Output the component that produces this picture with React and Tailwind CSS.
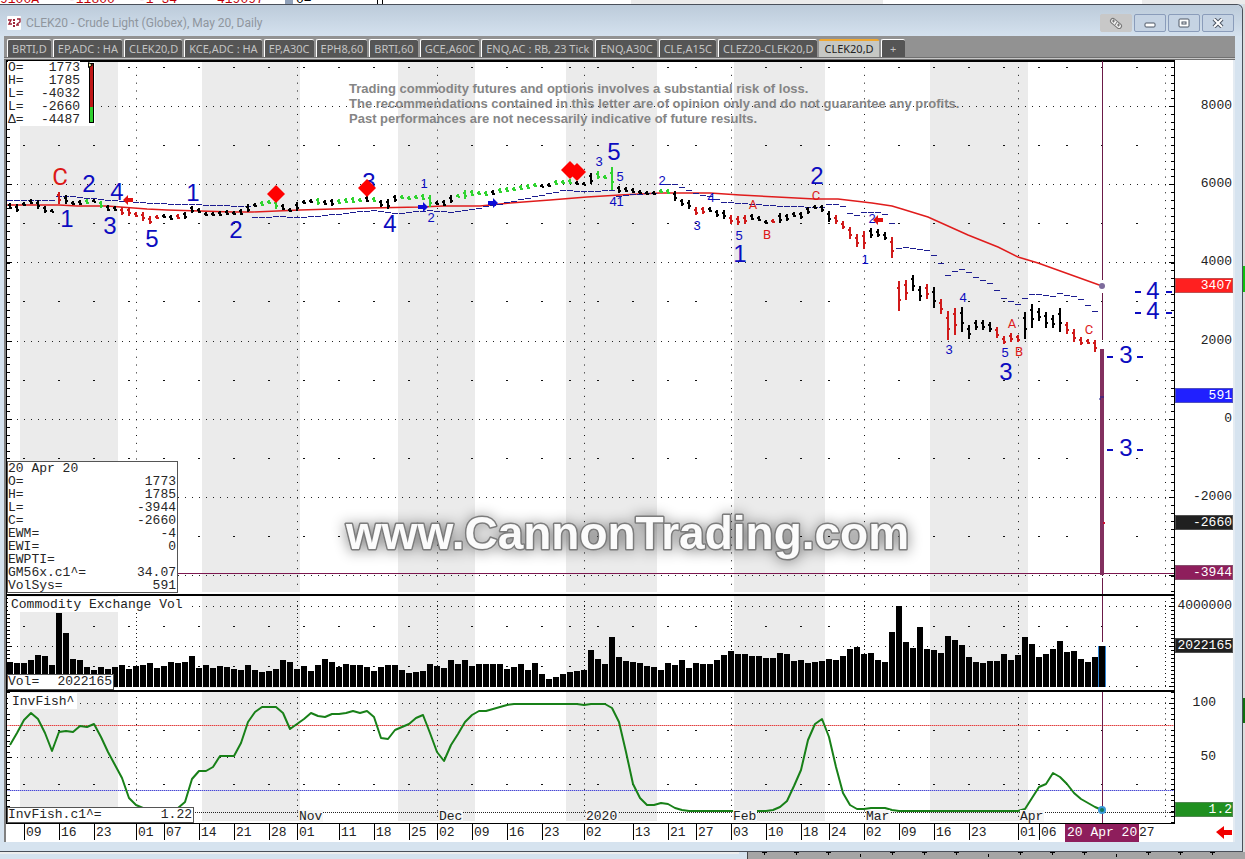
const MONO = "font-['Liberation_Mono',monospace]";

const TABS = [
  "BRTI,D",
  "EP,ADC : HA",
  "CLEK20,D",
  "KCE,ADC : HA",
  "EP,A30C",
  "EPH8,60",
  "BRTI,60",
  "GCE,A60C",
  "ENQ,AC : RB, 23 Tick",
  "ENQ,A30C",
  "CLE,A15C",
  "CLEZ20-CLEK20,D",
];

// one bar every 7 units, first one at x = 10
const barX = (i) => 10 + i * 7;

// ── Price bars: [high, low] in plot units, K black / R red / G green ──
const PRICE = `203 209 K,204 212 K,202 206 K,199 204 K,200 209 K,206 213 K,209 212 K,192 204 R,195 204 K,201 205 K,
200 205 K,199 204 G,199 202 K,201 208 G,205 211 K,206 211 K,207 215 R,207 216 R,212 217 R,212 221 R,
216 224 R,215 219 R,214 218 K,215 220 K,214 219 R,212 219 K,206 213 K,208 213 K,212 216 K,212 216 K,
211 216 K,210 215 K,211 215 K,209 215 K,204 212 K,203 207 K,201 206 G,200 204 G,200 209 G,204 210 K,
208 212 K,202 211 K,200 204 K,199 203 K,198 205 G,200 205 K,199 206 K,199 204 G,198 203 G,197 203 G,
198 202 G,196 202 K,197 202 G,200 207 K,199 209 K,195 202 K,195 199 G,196 200 G,195 199 G,194 200 G,
195 207 G,201 205 K,200 206 K,195 203 K,194 197 G,190 199 G,190 196 G,191 195 G,191 196 G,190 195 K,
188 193 G,187 192 G,187 191 G,185 190 G,184 189 G,183 187 G,184 187 K,183 187 K,180 185 G,180 184 G,
179 184 G,181 185 K,182 185 K,173 184 K,171 179 G,175 179 G,167 190 G,186 193 K,187 192 K,188 193 K,
190 194 K,191 195 K,191 195 K,189 193 G,189 194 G,191 201 K,199 206 K,200 209 K,207 215 R,207 214 R,
207 212 K,210 217 K,210 219 K,215 224 R,216 225 R,215 224 R,214 220 K,216 221 K,220 224 K,219 223 R,
213 223 K,214 221 K,212 217 K,212 219 K,207 214 K,205 209 K,205 212 K,211 222 K,215 224 R,221 229 R,
227 239 R,234 247 R,231 249 R,228 238 K,229 237 K,232 240 K,237 258 R,281 311 R,280 300 R,275 291 K,
286 301 K,284 299 R,287 308 K,299 314 R,311 340 R,308 335 R,307 332 K,325 339 K,320 330 K,320 330 K,
322 332 K,327 338 R,336 344 R,333 342 R,335 342 R,312 339 K,304 328 K,308 321 K,312 328 K,315 328 K,
308 332 K,322 334 R,329 342 R,337 345 R,339 344 R,340 352 R`
  .split(",")
  .map((row) => {
    const [hi, lo, tone] = row.trim().split(" ");
    return { hi: +hi, lo: +lo, tone };
  });

const TONES = { K: "#000000", R: "#d01a1a", G: "#2fd32f" };

const VOLUME = [
  662, 663, 663, 660, 655, 656, 665, 613, 633, 659, 660, 667, 670, 667, 669, 667, 665, 669, 666, 665,
  663, 668, 666, 662, 663, 662, 656, 668, 665, 668, 666, 667, 669, 670, 665, 670, 672, 671, 669, 660,
  662, 669, 666, 671, 665, 659, 662, 667, 664, 665, 665, 667, 671, 667, 665, 665, 670, 673, 672, 671,
  664, 666, 668, 660, 664, 660, 666, 664, 664, 664, 664, 669, 667, 664, 670, 663, 674, 679, 677, 674,
  672, 671, 670, 650, 659, 664, 637, 657, 661, 662, 663, 666, 667, 670, 663, 665, 660, 668, 663, 664,
  664, 660, 655, 651, 654, 654, 656, 656, 658, 658, 653, 654, 661, 660, 663, 662, 661, 659, 660, 656,
  649, 647, 654, 653, 660, 662, 632, 606, 642, 648, 627, 649, 650, 653, 636, 640, 645, 657, 662, 663,
  661, 661, 654, 660, 655, 637, 644, 657, 654, 649, 641, 652, 651, 659, 662, 657, 646,
];

const FISH = [
  745, 733, 720, 713, 719, 733, 751, 732, 731, 732, 726, 727, 724, 737, 752, 765, 778, 798, 805, 808,
  810, 810, 810, 810, 808, 802, 779, 771, 771, 767, 756, 756, 756, 743, 722, 712, 707, 707, 707, 713,
  729, 724, 719, 713, 716, 717, 714, 714, 713, 711, 713, 711, 717, 738, 739, 730, 727, 724, 718, 715,
  733, 752, 761, 745, 734, 722, 715, 711, 711, 709, 707, 705, 704, 704, 704, 704, 704, 704, 704, 704,
  704, 704, 705, 704, 704, 704, 708, 722, 752, 784, 798, 805, 805, 803, 804, 808, 810, 811, 811, 811,
  811, 811, 811, 811, 811, 811, 811, 811, 811, 810, 807, 801, 786, 770, 740, 724, 719, 737, 767, 793,
  805, 809, 809, 808, 808, 808, 810, 811, 811, 811, 811, 811, 811, 811, 811, 811, 811, 811, 811, 811,
  811, 811, 811, 811, 811, 809, 798, 787, 784, 773, 777, 784, 793, 799, 803, 807, 810,
];

const AVERAGE =
  "7,205 59,205 77,206 107,206 147,209 167,210 233,212 253,212 300,210 333,209 370,208 420,207 443,206 480,206 510,203 550,200 587,197 620,195 660,193 710,193 740,195 777,197 815,199 838,199 855,201 872,203 892,206 902,209 928,217 968,235 998,247 1018,257 1038,263 1102,286";

// stop levels as [bar index, y]; a null breaks the run
const STOPS = [
  [0, 201], [6, 201], [7, 197], [9, 197], [14, 201], [17, 202], [21, 204], [25, 205], [30, 206], [34, 207], null,
  [35, 218], [39, 217], [41, 218], [45, 216], [49, 213], [52, 211], [55, 214], [57, 213], [60, 211], [63, 213],
  [66, 210], [69, 206], [73, 200], [76, 196], [79, 191], [83, 192], [86, 191], null,
  [87, 197], [89, 195], [92, 194], null,
  [94, 185], [95, 185], [97, 191], [98, 194], [100, 197], [102, 203], [105, 204], [108, 206], [112, 207], [116, 208],
  [117, 205], [118, 205], [119, 207], [120, 214], [121, 216], [122, 213], [124, 213], [125, 215], [126, 224],
  [127, 249], [128, 248], [129, 249], [131, 251], [132, 256], [133, 264], [134, 276], [135, 272], [136, 270],
  [137, 273], [138, 278], [139, 281], [140, 284], [141, 291], [142, 299], [143, 302], [144, 305], [145, 299],
  [146, 295], [147, 295], [148, 296], [149, 297], [150, 294], [151, 296], [152, 297], [153, 300], [154, 306], [155, 312],
];

const stopDashes = [];
STOPS.forEach((p, n) => {
  const next = STOPS[n + 1];
  if (!p) return;
  const end = next ? next[0] : p[0] + 1;
  for (let i = p[0]; i < end; i++) {
    const t = (i - p[0]) / (end - p[0]);
    const y = next ? p[1] + (next[1] - p[1]) * t : p[1];
    stopDashes.push([barX(i), Math.round(y)]);
  }
});

const BANDS = [[20, 98], [202, 98], [398, 77], [566, 91], [734, 91], [930, 98]];
const MONTH_LINES = [136, 297, 437, 584, 731, 864, 1018, 1165];
const WEEKS = [
  24, 59, 94, 129, 164, 199, 234, 269, 304, 339, 374, 409, 472, 507, 542, 570, 598, 633, 668, 696, 766, 801, 829, 899,
  934, 969, 1004, 1039, 1067, 1102, 1137,
];
const DATES = [
  [24, "09"], [59, "16"], [94, "23"], [136, "01"], [164, "07"], [199, "14"], [234, "21"], [269, "28"], [297, "01"],
  [339, "11"], [374, "18"], [409, "25"], [437, "02"], [472, "09"], [507, "16"], [542, "23"], [584, "02"], [633, "13"],
  [668, "21"], [696, "27"], [731, "03"], [766, "10"], [801, "18"], [829, "24"], [864, "02"], [899, "09"], [934, "16"],
  [969, "23"], [1018, "01"], [1039, "06"], [1137, "27"],
];
const MONTHS = [[297, "Nov"], [437, "Dec"], [584, "2020"], [731, "Feb"], [864, "Mar"], [1018, "Apr"]];

// wave counts: text, centre x, baseline y
const BIG = [
  ["C", 60, 185, "r"], ["2", 89, 192], ["4", 117, 200], ["1", 67, 227], ["3", 110, 234], ["5", 152, 247],
  ["1", 193, 201], ["2", 236, 238], ["3", 369, 190], ["4", 390, 232], ["5", 614, 160], ["1", 740, 262],
  ["2", 817, 184], ["3", 1006, 380], ["4", 1153, 299], ["4", 1153, 319], ["3", 1126, 363], ["3", 1126, 456],
];
const SMALL = [
  ["1", 424, 188], ["2", 431, 222], ["3", 599, 166], ["5", 620, 181], ["4", 613, 206], ["1", 620, 206],
  ["2", 662, 185], ["4", 711, 202], ["3", 697, 230], ["5", 739, 240], ["A", 753, 209, "r"], ["B", 767, 239, "r"],
  ["C", 816, 200, "r"], ["1", 865, 264], ["2", 872, 223], ["3", 949, 354], ["4", 963, 302], ["5", 1005, 357],
  ["A", 1012, 328, "r"], ["B", 1019, 356, "r"], ["C", 1089, 334, "r"],
];
const WAVE_DASHES = [
  [1135, 292], [1166, 292], [1135, 313], [1166, 313], [1107, 357], [1137, 357], [1107, 450], [1137, 450],
];

function Grid({ top, bottom, step, lines, halves, majors }) {
  const ticks = [];
  for (let y = majors[0]; y > top; y -= step) ticks.push(Math.round(y));
  for (let y = majors[0] + step; y < bottom; y += step) ticks.push(Math.round(y));
  return (
    <g>
      {BANDS.map(([x, w]) => (
        <rect key={x} x={x} y={top + 1} width={w} height={bottom - top - 3} fill="#ebebeb" />
      ))}
      {lines.map((y) => (
        <path key={y} d={`M10 ${y + 0.5}H1172`} stroke="#222" strokeDasharray="1 6" />
      ))}
      {halves.map((y) => (
        <g key={y}>
          {WEEKS.map((x) => (
            <rect key={x} x={x - 1} y={y} width="2" height="1" fill="#111" />
          ))}
        </g>
      ))}
      {MONTH_LINES.map((x) => (
        <path key={x} d={`M${x + 0.5} ${top + 7}V${bottom - 3}`} stroke="#111" strokeDasharray={`1 ${step - 1}`} />
      ))}
      {ticks.map((y) => (
        <path key={y} d={`M7 ${y + 0.5}h3M1174 ${y + 0.5}h-3`} stroke="#000" />
      ))}
      {majors.map((y) => (
        <path key={y} d={`M7 ${y + 0.5}h5M1174 ${y + 0.5}h-5`} stroke="#000" />
      ))}
      <path d={`M6.5 ${top}V${bottom}M1174.5 ${top}V${bottom}`} stroke="#000" />
      <path d={`M6 ${top + 1}H1175`} stroke="#000" strokeWidth="2" />
    </g>
  );
}

function AxisLabel({ y, x = 1232, children }) {
  return (
    <text x={x} y={y} textAnchor="end" className={`${MONO} text-[13px]`} fill="#222">
      {children}
    </text>
  );
}

function PriceTag({ y, fill, children }) {
  return (
    <g>
      <rect x="1175" y={y} width="58" height="15" fill={fill} />
      <rect x="1175.5" y={y + 0.5} width="57" height="14" fill="none" stroke="#80808080" />
      <text x="1232" y={y + 11} textAnchor="end" fill="#fff" className={`${MONO} text-[13px]`}>
        {children}
      </text>
    </g>
  );
}

function Diamond({ x, y }) {
  return <path d={`M${x} ${y - 9}l9 9l-9 9l-9 -9z`} fill="#ff0000" />;
}

function Arrow({ x, y, dir, fill }) {
  return <path d={`M${x} ${y}l${dir * -5} -5v3h${dir * -5}v4h${dir * 5}v3z`} fill={fill} />;
}

function WaveText({ mark, className }) {
  const [t, x, y, red] = mark;
  return (
    <text
      x={x}
      y={y}
      fill={red ? "#dc1818" : "#0c0cc0"}
      className={`${className} ${red ? "font-['Roboto',sans-serif]" : "font-['Liberation_Sans',sans-serif]"}`}
    >
      {t}
    </text>
  );
}

function PricePanel() {
  return (
    <svg viewBox="6 60 1227 534" className="block h-auto w-full bg-white" role="img" aria-label="Crude Light daily prices">
      <Grid
        top={60}
        bottom={594}
        step={7.83}
        lines={[106, 184, 262, 341, 419, 497, 575]}
        halves={[67, 145, 223, 301, 380, 458, 536]}
        majors={[106, 184, 262, 341, 419, 497, 575]}
      />

      <g className="font-['Liberation_Sans',sans-serif] text-[13px] font-bold" fill="#858585">
        <text x="349" y="93">Trading commodity futures and options involves a substantial risk of loss.</text>
        <text x="349" y="108">
          The recommendations contained in this letter are of opinion only and do not guarantee any profits.
        </text>
        <text x="349" y="123">Past performances are not necessarily indicative of future results.</text>
      </g>

      {/* Averages and stops */}
      <polyline points={AVERAGE} fill="none" stroke="#e01c1c" strokeWidth="1.5" />
      {stopDashes.map(([x, y]) => (
        <path key={x} d={`M${x - 3} ${y - 0.5}h6`} stroke="#1c1c90" />
      ))}

      {PRICE.map(({ hi, lo, tone }, i) => {
        const x = barX(i);
        const span = lo - hi;
        return (
          <g key={i} fill={TONES[tone]}>
            <rect x={x - 1} y={hi} width="2" height={span} />
            <rect x={x - 2} y={Math.round(hi + span * 0.2)} width="2" height="2" />
            <rect x={x} y={Math.round(hi + span * 0.6)} width="2" height="2" />
          </g>
        );
      })}

      {/* Cursor and the last bar */}
      <path d="M1102.5 61V280M1102.5 293V340M1102.5 578V594" stroke="#6b1a48" />
      <path d="M7 573.5H1174" stroke="#7c1850" />
      <rect x="1100" y="349" width="4" height="226" fill="#82305f" />
      <circle cx="1102" cy="286" r="3" fill="#7d6b9c" />
      <path d="M1099 399h2M1100 397h4" stroke="#1c1c90" />
      <rect x="1103" y="522" width="2" height="2" fill="#d01030" />

      {/* Wave counts */}
      <g textAnchor="middle">
        {BIG.map((mark) => (
          <WaveText key={mark.join("-")} mark={mark} className="text-[24px]" />
        ))}
        {SMALL.map((mark) => (
          <WaveText key={mark.join("-")} mark={mark} className="text-[13px]" />
        ))}
      </g>
      {WAVE_DASHES.map(([x, y]) => (
        <rect key={`${x}-${y}`} x={x} y={y - 1} width="6" height="2" fill="#0c0cc0" />
      ))}
      <Diamond x={276} y={194} />
      <Diamond x={367} y={188} />
      <Diamond x={570} y={170} />
      <Diamond x={577} y={172} />
      <Arrow x={123} y={200} dir={-1} fill="#e01010" />
      <Arrow x={873} y={220} dir={-1} fill="#e01010" />
      <Arrow x={428} y={207} dir={1} fill="#0c0cd8" />
      <Arrow x={498} y={203} dir={1} fill="#0c0cd8" />

      <text
        x="346"
        y="549"
        fill="#fbfbfb"
        stroke="#7c7c7c"
        strokeWidth="3"
        paintOrder="stroke"
        strokeLinejoin="round"
        className="font-['Liberation_Sans',sans-serif] text-[46px] font-bold drop-shadow-[0_1px_7px_rgba(0,0,0,0.45)]"
      >
        www.CannonTrading.com
      </text>

      <AxisLabel y={109}>8000</AxisLabel>
      <AxisLabel y={187}>6000</AxisLabel>
      <AxisLabel y={265}>4000</AxisLabel>
      <AxisLabel y={344}>2000</AxisLabel>
      <AxisLabel y={422}>0</AxisLabel>
      <AxisLabel y={500}>-2000</AxisLabel>
      <PriceTag y={278} fill="#ff2020">3407</PriceTag>
      <PriceTag y={388} fill="#2020ff">591</PriceTag>
      <PriceTag y={515} fill="#202020">-2660</PriceTag>
      <PriceTag y={565} fill="#8e1e5c">-3944</PriceTag>
    </svg>
  );
}

function VolumePanel() {
  return (
    <svg viewBox="6 594 1227 96" className="block h-auto w-full bg-white" role="img" aria-label="Commodity Exchange Volume">
      <Grid top={594} bottom={690} step={4} lines={[606, 646, 686]} halves={[626, 666]} majors={[606, 646, 686]} />
      {VOLUME.map((y, i) => (
        <rect key={i} x={barX(i) - 3} y={y} width="6" height={687 - y} fill="#000" />
      ))}
      <path d="M1098.5 646V687M1105.5 646V687" stroke="#2f86d8" />
      <path d="M1102.5 596V642" stroke="#6b1a48" />
      <rect x="8" y="597" width="181" height="15" fill="#fff" />
      <text x="11" y="608" fill="#222" className={`${MONO} text-[13px]`}>Commodity Exchange Vol</text>
      <AxisLabel y={609}>4000000</AxisLabel>
      <PriceTag y={638} fill="#202020">2022165</PriceTag>
    </svg>
  );
}

function FishPanel() {
  return (
    <svg viewBox="6 690 1227 133" className="block h-auto w-full bg-white" role="img" aria-label="InvFish indicator">
      <Grid top={690} bottom={823} step={5.4} lines={[703, 757]} halves={[730, 784]} majors={[703, 757, 812]} />
      <path d="M7 725.5H1174" stroke="#f0a0a0" />
      <path d="M10 725.5H1174" stroke="#e04040" strokeDasharray="1 1" />
      <path d="M7 790.5H1174" stroke="#b0b0f0" />
      <path d="M10 790.5H1174" stroke="#4848d0" strokeDasharray="1 1" />
      <path d="M7 812.5H1174" stroke="#222" strokeDasharray="1 1" />
      <path d="M1102.5 692V823" stroke="#6b1a48" />
      <polyline
        points={FISH.map((y, i) => `${barX(i)},${y}`).join(" ")}
        fill="none"
        stroke="#188018"
        strokeWidth="2"
        strokeLinejoin="round"
      />
      <circle cx="1102" cy="810" r="4" fill="#3a98d8" />
      <circle cx="1102" cy="810" r="2" fill="#107858" />
      <rect x="8" y="693" width="69" height="16" fill="#fff" />
      <text x="12" y="705" fill="#222" className={`${MONO} text-[13px]`}>InvFish^</text>
      {MONTHS.map(([x, label]) => (
        <g key={label}>
          <rect x={x + 2} y="810" width={label.length * 8} height="12" fill="#f6f6f6" />
          <text x={x + 2} y="820" fill="#222" className={`${MONO} text-[13px]`}>{label}</text>
        </g>
      ))}
      <AxisLabel y={706} x={1216}>100</AxisLabel>
      <AxisLabel y={760} x={1216}>50</AxisLabel>
      <PriceTag y={802} fill="#209020">1.2</PriceTag>
    </svg>
  );
}

function DateAxis() {
  return (
    <svg viewBox="6 823 1227 19" className="block h-auto w-full bg-white" role="img" aria-label="Dates">
      <path d="M6 823.5H1175" stroke="#000" />
      {DATES.map(([x, label]) => (
        <g key={x}>
          <path d={`M${x + 0.5} 823V840`} stroke="#000" />
          <text x={x + 2} y="836" fill="#222" className={`${MONO} text-[13px]`}>{label}</text>
        </g>
      ))}
      <rect x="1065" y="824" width="74" height="18" fill="#8e1e5c" />
      <text x="1067" y="836" fill="#fff" className={`${MONO} text-[13px]`}>20 Apr 20</text>
      <path d="M1216 832l8 -6v4h8v5h-8v4z" fill="#f00000" />
    </svg>
  );
}

function Readout({ rows, className }) {
  return (
    <dl className={`${MONO} absolute bg-white text-[13px] leading-[13px] text-neutral-800 ${className}`}>
      {rows.map(([name, value], n) => (
        <div key={n} className="flex justify-between">
          <dt className="whitespace-pre">{name}</dt>
          <dd>{value}</dd>
        </div>
      ))}
    </dl>
  );
}

function WindowButton({ label, muted, children }) {
  return (
    <button
      type="button"
      aria-label={label}
      className={`flex h-[18px] w-8 items-center justify-center rounded-xs border ${
        muted ? "border-[#c8c8c8] bg-[#c8c8c8]" : "border-[#8a9cba] bg-[#c5d3e3]"
      }`}
    >
      {children}
    </button>
  );
}

export default function App() {
  return (
    <div className="flex min-h-screen w-full flex-col overflow-hidden bg-[#d6e3ef]">
      {/* Sliver of the quote window behind */}
      <div className={`${MONO} flex h-1 items-end overflow-hidden bg-white text-[13px] leading-[8px] whitespace-pre`}>
        <div className="flex w-[285px] shrink-0 text-red-700">
          <span className="w-[68px]">9100A</span>
          <span className="w-[70px]">-11800</span>
          <span className="w-[79px]">-1 34</span>
          <span>419097</span>
        </div>
        <div className="w-[92px] shrink-0 border-l-8 border-slate-400 pl-[3px]">0=</div>
        <div className="h-full w-[6px] border-r border-l border-black" />
        <div className="h-full w-[248px]" />
        <div className="h-full w-[252px] bg-[#ebebeb]" />
        <div className="h-full w-[259px]" />
        <div className="h-full flex-1 bg-[#ebebeb]" />
      </div>

      <div className="flex">
        <main className="min-w-0 flex-1 rounded-tr-md border-t border-r border-b border-[#4a505a] bg-[#d6e3ef] pr-[7px] pb-[9px] pl-1">
          <header className="-mr-[7px] -ml-1 flex h-[31px] items-center gap-[5px] rounded-tr-md bg-linear-to-b from-[#bccbda] to-[#d4e1ee] pt-[5px] pr-2 pl-[7px]">
            <svg viewBox="0 0 14 14" className="size-[14px]">
              <rect width="14" height="14" rx="1" fill="#fff" />
              <path d="M1 4h3l-2 4h3M9 9h3M10 3h3v3l-3 2" fill="none" stroke="#9c2036" strokeWidth="1.4" />
              <path d="M6 3h2v2H6zM6 6h2v2H6zM6 9h2v2H6z" fill="#9c2036" />
            </svg>
            <h1 className="flex-1 text-[12px] leading-4 text-[#8f969e] font-['Roboto',sans-serif]">
              CLEK20 - Crude Light (Globex), May 20, Daily
            </h1>
            <div className="flex gap-[2px]">
              <WindowButton label="Link window" muted>
                <svg viewBox="0 0 14 12" className="h-3 w-[14px]">
                  <path d="M4 4l6 5" stroke="#777" strokeWidth="6" strokeLinecap="round" />
                  <path d="M4 4l6 5" stroke="#eee" strokeWidth="4" strokeLinecap="round" />
                  <path d="M3 4h3M4.5 2.5v3M8 8h3M9.5 6.5v3M6 8l2 -3" stroke="#777" />
                </svg>
              </WindowButton>
              <WindowButton label="Minimize">
                <svg viewBox="0 0 12 10" className="h-[10px] w-3">
                  <rect x="1" y="5" width="10" height="4" rx="1" fill="#fff" stroke="#4c5664" />
                </svg>
              </WindowButton>
              <WindowButton label="Maximize">
                <svg viewBox="0 0 12 10" className="h-[10px] w-3">
                  <rect x="1" y="1" width="10" height="8" rx="1" fill="#fff" stroke="#4c5664" />
                  <rect x="4" y="4" width="4" height="2" fill="none" stroke="#4c5664" />
                </svg>
              </WindowButton>
              <WindowButton label="Close">
                <svg viewBox="0 0 12 10" className="h-[10px] w-3">
                  <path d="M2 1l8 8M10 1l-8 8" stroke="#4c5664" strokeWidth="4" />
                  <path d="M2 1l8 8M10 1l-8 8" stroke="#fff" strokeWidth="2" />
                </svg>
              </WindowButton>
            </div>
          </header>

          <nav className="flex h-[21px] items-end gap-[2px] overflow-hidden bg-[#929292] pt-[2px] pl-[3px] text-[11px] font-['Noto_Sans',sans-serif]">
            {TABS.map((tab) => (
              <button
                key={tab}
                type="button"
                className="h-[18px] shrink-0 rounded-t-xs border-t border-l border-white bg-[#555] px-1 leading-[14px] whitespace-nowrap text-[#c4c4c4]"
              >
                {tab}
              </button>
            ))}
            <button
              type="button"
              className="h-[18px] shrink-0 rounded-t-xs border-t-2 border-[#f0a830] bg-[#c6c8c4] px-[5px] leading-[14px] text-[#222]"
            >
              CLEK20,D
            </button>
            <button
              type="button"
              aria-label="Add tab"
              className="h-[18px] w-6 shrink-0 rounded-t-xs border-t border-l border-white bg-[#555] leading-[14px] text-[#c4c4c4]"
            >
              +
            </button>
          </nav>
          <div className="h-[3px] border-t border-b border-[#707070] bg-[#c8c8c8]" />

          <div className="border-r-2 border-l-2 border-r-[#e4ebf2] border-l-[#808080]">
            <section className="relative">
              <PricePanel />
              <div className="absolute top-[2px] left-px h-16 w-[88px] bg-white" />
              <Readout
                className="top-[1px] left-[2px] w-[72px] bg-transparent"
                rows={[["O=", "1773"], ["H=", "1785"], ["L=", "-4032"], ["L=", "-2660"], ["Δ=", "-4487"]]}
              />
              <div className="absolute top-[3px] left-[83px] flex h-[60px] w-[5px] flex-col border border-black bg-[#c01818]">
                <div className="mt-auto h-[15px] bg-[#30d030]" />
              </div>
              <svg viewBox="0 0 5 6" className="absolute top-[2px] left-[82px] h-[6px] w-[5px]">
                <path d="M0.5 0.5L4.5 3L0.5 5.5z" fill="#ffffa0" stroke="#000" />
              </svg>
              <Readout
                className="bottom-px left-px w-[171px] border border-[#555] pr-px"
                rows={[
                  ["20 Apr 20", ""],
                  ["O=", "1773"],
                  ["H=", "1785"],
                  ["L=", "-3944"],
                  ["C=", "-2660"],
                  ["EWM=", "-4"],
                  ["EWI=", "0"],
                  ["EWPTI=", ""],
                  ["GM56x.c1^=", "34.07"],
                  ["VolSys=", "591"],
                ]}
              />
            </section>
            <section className="relative">
              <VolumePanel />
              <Readout className="bottom-0 left-px w-[107px] border border-[#555] pr-px pb-px" rows={[["Vol=", "2022165"]]} />
            </section>
            <section className="relative">
              <FishPanel />
              <Readout className="bottom-0 left-px w-[187px] border border-[#555] pr-px pb-px" rows={[["InvFish.c1^=", "1.22"]]} />
            </section>
            <DateAxis />
          </div>
        </main>

        {/* Edge of the neighbouring chart */}
        <aside className="flex w-[2px] flex-col bg-[#dcdcdc]">
          <div className="mt-[262px] h-[26px] bg-[#10c010]" />
          <div className="mt-[406px] h-[25px] bg-[#107010]" />
        </aside>
      </div>

      <footer className="flex flex-1">
        <div className="w-3/5">
          <div className="mr-2 h-[2px] bg-[#eeeeee]" />
        </div>
        <div className="flex flex-1 overflow-hidden border-l border-[#444] bg-[#a5a5a5]">
          {Array.from({ length: 15 }, (_, n) =>
            n % 4 === 3 ? (
              <div key={n} className="flex w-8 shrink-0 justify-center pt-[2px]">
                <span className="h-[3px] w-px bg-black" />
              </div>
            ) : (
              <div key={n} className="flex w-8 shrink-0 flex-col items-center">
                <span className="h-px w-[5px] bg-black" />
                <span className="h-[2px] w-px bg-black" />
              </div>
            )
          )}
        </div>
      </footer>
    </div>
  );
}
